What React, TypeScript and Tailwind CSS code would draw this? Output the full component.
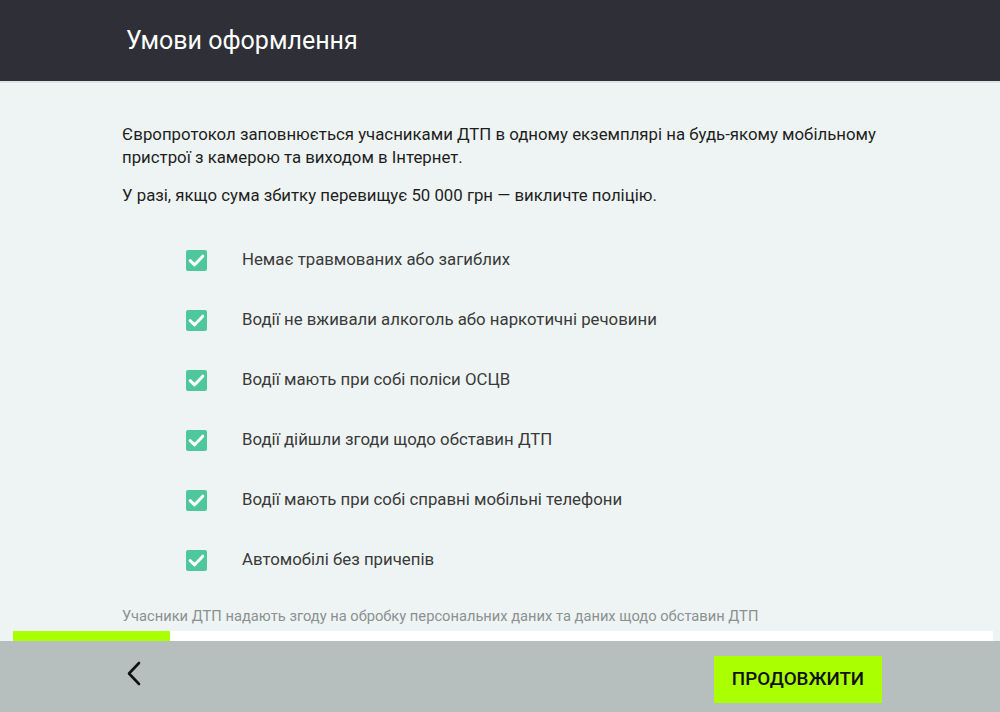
import React from "react";

const items = [
  "Немає травмованих або загиблих",
  "Водії не вживали алкоголь або наркотичні речовини",
  "Водії мають при собі поліси ОСЦВ",
  "Водії дійшли згоди щодо обставин ДТП",
  "Водії мають при собі справні мобільні телефони",
  "Автомобілі без причепів",
];

function Check() {
  return (
    <span className="flex h-[21px] w-[21px] items-center justify-center rounded-[2px] bg-[#4fc79c]">
      <svg width="21" height="21" viewBox="0 0 21 21" fill="none">
        <path d="M4.2 10.6 L8.6 14.8 L16.8 6.2" stroke="white" strokeWidth="3" strokeLinecap="round" strokeLinejoin="round" />
      </svg>
    </span>
  );
}

export default function App() {
  return (
    <div className="flex h-[712px] w-[1000px] flex-col bg-[#eef4f4] font-['Roboto',sans-serif]">
      <header className="flex h-[83px] shrink-0 items-center border-b-2 border-[#dde5e6] bg-[#2e2f37] pl-[126px]">
        <h1 className="text-[25px] font-normal leading-[30px] text-white">Умови оформлення</h1>
      </header>
      <main className="flex flex-1 flex-col pl-[122px] pt-[40px]">
        <p className="w-[790px] text-[16.8px] leading-[23px] text-[#1e1e1e]">
          Європротокол заповнюється учасниками ДТП в одному екземплярі на будь-якому мобільному пристрої з камерою та виходом в Інтернет.
        </p>
        <p className="mt-[15px] text-[16.8px] leading-[23px] text-[#1e1e1e]">
          У разі, якщо сума збитку перевищує 50 000 грн — викличте поліцію.
        </p>
        <ul className="mt-[41px] flex flex-col gap-[36px] pl-[64px]">
          {items.map((t) => (
            <li key={t} className="flex h-[24px] items-center">
              <Check />
              <span className="ml-[35px] text-[16.8px] text-[#3a3a3a]">{t}</span>
            </li>
          ))}
        </ul>
        <p className="mt-[34px] text-[14.7px] leading-[20px] text-[#8b9091]">
          Учасники ДТП надають згоду на обробку персональних даних та даних щодо обставин ДТП
        </p>
      </main>
      <div className="ml-[13px] mr-[7px] mt-auto flex h-[10px] shrink-0 bg-white">
        <div className="w-[157px] bg-[#aaff00]" />
      </div>
      <footer className="flex h-[71px] shrink-0 items-start justify-between bg-[#b7bfbe] pl-[124px] pr-[118px] pt-[15px]">
        <button className="mt-[3px] flex h-[30px] w-[20px] items-center justify-center">
          <svg width="16" height="26" viewBox="0 0 16 26" fill="none">
            <path d="M13 2 L3 12.5 L13 23" stroke="#111" strokeWidth="2.6" strokeLinecap="round" strokeLinejoin="round" />
          </svg>
        </button>
        <button className="h-[47px] w-[168px] bg-[#aaff00] text-[18.8px] font-medium text-[#111]">
          ПРОДОВЖИТИ
        </button>
      </footer>
    </div>
  );
}
